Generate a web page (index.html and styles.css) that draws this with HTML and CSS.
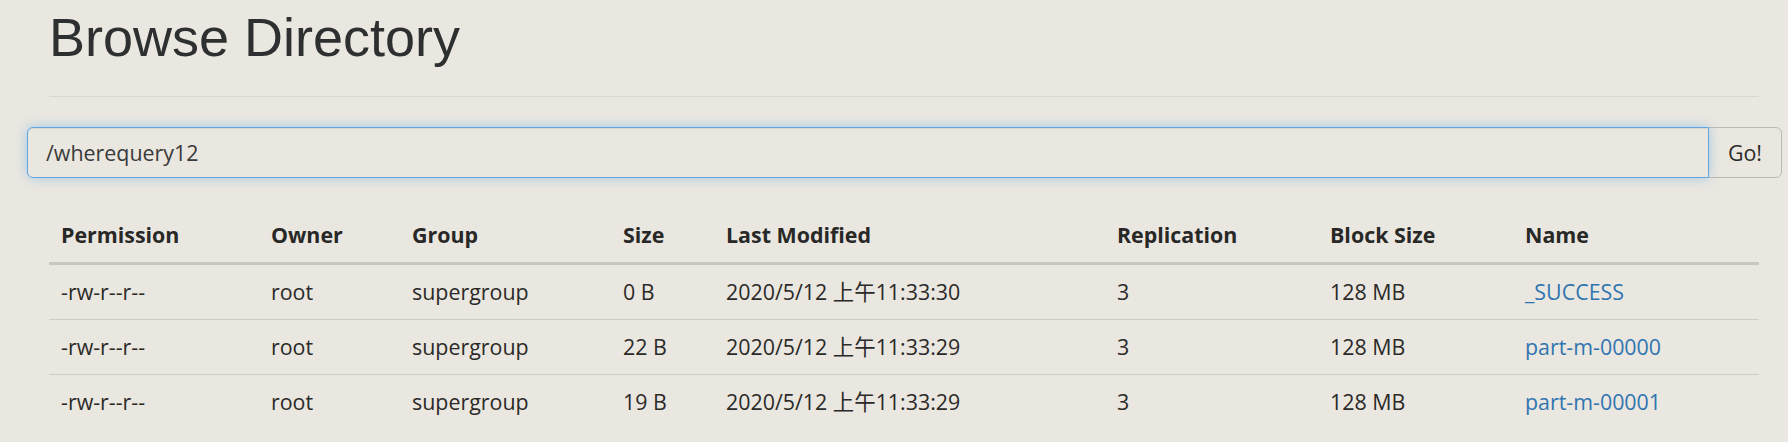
FILE: index.html
```html
<!DOCTYPE html>
<html lang="zh-CN">
<head>
<meta charset="utf-8">
<title>Browse Directory</title>
<link rel="stylesheet" href="styles.css">
</head>
<body>
<div class="container">
  <div class="page-header">
    <h1>Browse Directory</h1>
  </div>
  <form class="input-group">
    <input class="path-input" type="text" value="/wherequery12">
    <button class="go-btn" type="button">Go!</button>
  </form>
  <table class="listing">
    <thead>
      <tr>
        <th class="c-perm">Permission</th>
        <th class="c-owner">Owner</th>
        <th class="c-group">Group</th>
        <th class="c-size">Size</th>
        <th class="c-mod">Last Modified</th>
        <th class="c-rep">Replication</th>
        <th class="c-block">Block Size</th>
        <th class="c-name">Name</th>
      </tr>
    </thead>
    <tbody>
      <tr>
        <td>-rw-r--r--</td>
        <td>root</td>
        <td>supergroup</td>
        <td>0 B</td>
        <td>2020/5/12 上午11:33:30</td>
        <td>3</td>
        <td>128 MB</td>
        <td><a href="#">_SUCCESS</a></td>
      </tr>
      <tr>
        <td>-rw-r--r--</td>
        <td>root</td>
        <td>supergroup</td>
        <td>22 B</td>
        <td>2020/5/12 上午11:33:29</td>
        <td>3</td>
        <td>128 MB</td>
        <td><a href="#">part-m-00000</a></td>
      </tr>
      <tr>
        <td>-rw-r--r--</td>
        <td>root</td>
        <td>supergroup</td>
        <td>19 B</td>
        <td>2020/5/12 上午11:33:29</td>
        <td>3</td>
        <td>128 MB</td>
        <td><a href="#">part-m-00001</a></td>
      </tr>
    </tbody>
  </table>
</div>
</body>
</html>
```

FILE: styles.css
```css
* {
  box-sizing: border-box;
}

html, body {
  margin: 0;
  padding: 0;
  background: #eae7e0;
}

body {
  font-family: "Open Sans", "Noto Sans CJK SC", sans-serif;
  font-size: 21.4px;
  line-height: 30px;
  color: #2b2a28;
}

.container {
  padding: 8px 29px 0 49px;
}

.page-header {
  padding-bottom: 14px;
  border-bottom: 1px solid #d9d6cf;
}

.page-header h1 {
  margin: 0 0 15px 0;
  font-family: "Liberation Sans", Arial, sans-serif;
  font-size: 54px;
  font-weight: normal;
  line-height: 1.1;
  color: #2d2f30;
}

.input-group {
  display: flex;
  margin: 30px -23px 0 -22px;
  height: 51px;
}

.path-input {
  flex: 1;
  min-width: 0;
  height: 51px;
  margin: 0;
  padding: 9px 18px;
  font-family: "Open Sans", "Noto Sans CJK SC", sans-serif;
  font-size: 21.4px;
  line-height: 30px;
  color: #3a3a39;
  background: #eae7e0;
  border: 1px solid #62a6de;
  border-radius: 6px 0 0 6px;
  outline: none;
  box-shadow: inset 0 1px 1px rgba(0, 0, 0, 0.075), 0 0 12px rgba(102, 175, 233, 0.55);
  position: relative;
  z-index: 1;
}

.go-btn {
  flex: none;
  width: 74px;
  height: 51px;
  margin: 0 0 0 -1px;
  padding: 0 18px;
  font-family: "Open Sans", "Noto Sans CJK SC", sans-serif;
  font-size: 21.4px;
  line-height: 30px;
  color: #2b2a28;
  background: #eae7e0;
  border: 1px solid #bdbab3;
  border-radius: 0 6px 6px 0;
}

.listing {
  margin-top: 30px;
  width: 1710px;
  border-collapse: collapse;
  border-spacing: 0;
  table-layout: fixed;
}

.listing th,
.listing td {
  padding: 12px;
  text-align: left;
  line-height: 30px;
  white-space: nowrap;
}

.listing th {
  font-weight: bold;
  vertical-align: bottom;
  color: #282827;
  border-bottom: 3px solid #cac7c0;
}

.listing td {
  border-top: 1px solid #cfccc5;
  vertical-align: top;
}

.listing tbody tr:first-child td {
  border-top: 0;
}

.listing a {
  color: #3075b0;
  text-decoration: none;
}

.c-perm { width: 210px; }
.c-owner { width: 141px; }
.c-group { width: 211px; }
.c-size { width: 103px; }
.c-mod { width: 391px; }
.c-rep { width: 213px; }
.c-block { width: 195px; }
.c-name { width: 246px; }
```
